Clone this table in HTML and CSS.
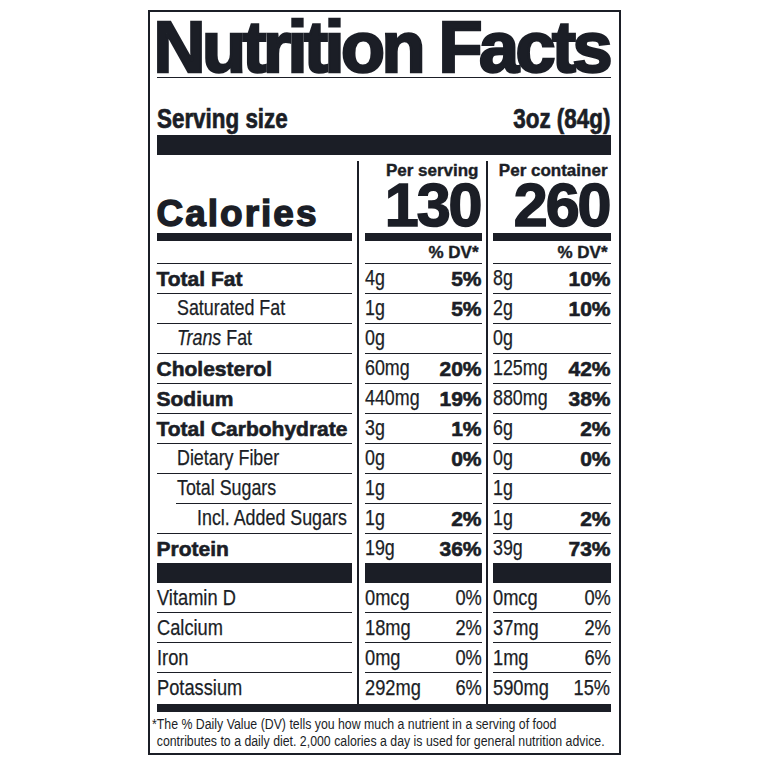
FILE: index.html
```html
<!DOCTYPE html>
<html lang="en">
<head>
<meta charset="utf-8">
<title>Nutrition Facts</title>
<link rel="stylesheet" href="styles.css">
</head>
<body>
<section class="label">
  <h1 class="title">Nutrition Facts</h1>
  <div class="serving"><span class="sq">Serving size</span><span class="sq end">3oz (84g)</span></div>
  <div class="facts">
    <div class="vline va"></div>
    <div class="vline vb"></div>

    <div class="c1 cal cal-label">Calories</div>
    <div class="c2 cal cal-col"><div class="per">Per serving</div><div class="big">130</div></div>
    <div class="c3 cal cal-col"><div class="per">Per container</div><div class="big">260</div></div>

    <div class="c1 dv"></div>
    <div class="c2 dv">% DV*</div>
    <div class="c3 dv">% DV*</div>

    <div class="c1 row b">Total Fat</div>
    <div class="c2 row val"><span class="r">4g</span><span class="b">5%</span></div>
    <div class="c3 row val"><span class="r">8g</span><span class="b">10%</span></div>

    <div class="c1 row in1"><span class="r">Saturated Fat</span></div>
    <div class="c2 row val"><span class="r">1g</span><span class="b">5%</span></div>
    <div class="c3 row val"><span class="r">2g</span><span class="b">10%</span></div>

    <div class="c1 row in1"><span class="r"><i>Trans</i> Fat</span></div>
    <div class="c2 row val"><span class="r">0g</span></div>
    <div class="c3 row val"><span class="r">0g</span></div>

    <div class="c1 row b">Cholesterol</div>
    <div class="c2 row val"><span class="r">60mg</span><span class="b">20%</span></div>
    <div class="c3 row val"><span class="r">125mg</span><span class="b">42%</span></div>

    <div class="c1 row b">Sodium</div>
    <div class="c2 row val"><span class="r">440mg</span><span class="b">19%</span></div>
    <div class="c3 row val"><span class="r">880mg</span><span class="b">38%</span></div>

    <div class="c1 row b">Total Carbohydrate</div>
    <div class="c2 row val"><span class="r">3g</span><span class="b">1%</span></div>
    <div class="c3 row val"><span class="r">6g</span><span class="b">2%</span></div>

    <div class="c1 row in1"><span class="r">Dietary Fiber</span></div>
    <div class="c2 row val"><span class="r">0g</span><span class="b">0%</span></div>
    <div class="c3 row val"><span class="r">0g</span><span class="b">0%</span></div>

    <div class="c1 row sugars"><span class="r">Total Sugars</span></div>
    <div class="c2 row val"><span class="r">1g</span></div>
    <div class="c3 row val"><span class="r">1g</span></div>

    <div class="c1 row in2"><span class="r">Incl. Added Sugars</span></div>
    <div class="c2 row val"><span class="r">1g</span><span class="b">2%</span></div>
    <div class="c3 row val"><span class="r">1g</span><span class="b">2%</span></div>

    <div class="c1 row heavy b">Protein</div>
    <div class="c2 row heavy val"><span class="r">19g</span><span class="b">36%</span></div>
    <div class="c3 row heavy val"><span class="r">39g</span><span class="b">73%</span></div>

    <div class="c1 row vit"><span class="r">Vitamin D</span></div>
    <div class="c2 row val vit"><span class="r">0mcg</span><span class="r end">0%</span></div>
    <div class="c3 row val vit"><span class="r">0mcg</span><span class="r end">0%</span></div>

    <div class="c1 row vit"><span class="r">Calcium</span></div>
    <div class="c2 row val vit"><span class="r">18mg</span><span class="r end">2%</span></div>
    <div class="c3 row val vit"><span class="r">37mg</span><span class="r end">2%</span></div>

    <div class="c1 row vit"><span class="r">Iron</span></div>
    <div class="c2 row val vit"><span class="r">0mg</span><span class="r end">0%</span></div>
    <div class="c3 row val vit"><span class="r">1mg</span><span class="r end">6%</span></div>

    <div class="c1 row vit last"><span class="r">Potassium</span></div>
    <div class="c2 row val vit last"><span class="r">292mg</span><span class="r end">6%</span></div>
    <div class="c3 row val vit last"><span class="r">590mg</span><span class="r end">15%</span></div>
  </div>
  <p class="foot"><span class="fn">*The % Daily Value (DV) tells you how much a nutrient in a serving of food<br>contributes to a daily diet. 2,000 calories a day is used for general nutrition advice.</span></p>
</section>
</body>
</html>
```

FILE: styles.css
```css
* {
  box-sizing: border-box;
  margin: 0;
  padding: 0;
}

body {
  margin: 0;
  background: #ffffff;
  color: #1b1e26;
  font-family: "Liberation Sans", Arial, sans-serif;
}

.label {
  width: 473px;
  margin: 10px auto 0;
  border: 2px solid #1b1e26;
  padding: 0 8px 0 7px;
}

.title {
  font-size: 72px;
  font-weight: 700;
  line-height: 60px;
  height: 66px;
  padding-top: 5px;
  letter-spacing: -3.5px;
  text-indent: -3px;
  white-space: nowrap;
  -webkit-text-stroke: 2.5px #1b1e26;
  border-bottom: 1px solid #1b1e26;
}

.serving {
  display: flex;
  justify-content: space-between;
  font-weight: 700;
  font-size: 28px;
  line-height: 30px;
  padding: 26px 0 1px;
  border-bottom: 20px solid #1b1e26;
  white-space: nowrap;
  -webkit-text-stroke: 0.7px #1b1e26;
}

/* condensed type: the label face is a narrow grotesque */
.sq {
  display: inline-block;
  transform: scaleX(0.8);
  transform-origin: 0 50%;
}

.sq.end {
  transform-origin: 100% 50%;
}

.facts {
  display: grid;
  grid-template-columns: 195px 13px 117px 11px 118px;
  grid-template-rows: 80px 23px repeat(9, 30px) 49px repeat(3, 30px) 31px;
  margin-top: 6px;
}

.vline {
  grid-row: 1 / -1;
  width: 2px;
  justify-self: center;
  background: #1b1e26;
}

.va { grid-column: 2; }
.vb { grid-column: 4; }

.c1 { grid-column: 1; }
.c2 { grid-column: 3; }
.c3 { grid-column: 5; }

.cal {
  border-bottom: 8px solid #1b1e26;
}

.cal-label {
  display: flex;
  align-items: flex-end;
  padding-bottom: 1px;
  font-size: 37px;
  font-weight: 700;
  line-height: 37px;
  letter-spacing: 2px;
  -webkit-text-stroke: 1.4px #1b1e26;
}

.cal-col {
  display: flex;
  flex-direction: column;
  align-items: flex-end;
  padding-right: 3px;
  font-weight: 700;
}

.per {
  font-size: 17px;
  line-height: 19px;
  -webkit-text-stroke: 0.4px #1b1e26;
}

.big {
  font-size: 61px;
  line-height: 50px;
  letter-spacing: -2px;
  margin-right: -2px;
  -webkit-text-stroke: 1.6px #1b1e26;
}

.dv {
  border-bottom: 1px solid #1b1e26;
  padding: 1px 3px 0 0;
  text-align: right;
  font-size: 17px;
  font-weight: 700;
  line-height: 21px;
  -webkit-text-stroke: 0.4px #1b1e26;
}

.row {
  border-bottom: 1px solid #1b1e26;
  line-height: 29px;
  white-space: nowrap;
}

.row.heavy {
  border-bottom: 20px solid #1b1e26;
}

.row.last {
  border-bottom: none;
}

.val {
  display: flex;
  justify-content: space-between;
}

.b {
  font-weight: 700;
  font-size: 21px;
  -webkit-text-stroke: 0.6px #1b1e26;
}

.r {
  display: inline-block;
  font-weight: 400;
  font-size: 21.5px;
  transform: scaleX(0.83);
  transform-origin: 0 50%;
  -webkit-text-stroke: 0.25px #1b1e26;
}

.r.end {
  transform-origin: 100% 50%;
}

.vit .r {
  font-size: 22px;
}

.in1 { padding-left: 20px; }
.in2 { padding-left: 40px; }

.sugars {
  margin-left: 19px;
  padding-left: 1px;
}

.foot {
  border-top: 8px solid #1b1e26;
  padding: 4px 0 3px;
  font-size: 14px;
  line-height: 17px;
  white-space: nowrap;
}

.fn {
  display: inline-block;
  margin-left: -4.5px;
  padding-left: 5.4px;
  text-indent: -5.4px;
  transform: scaleX(0.88);
  transform-origin: 0 0;
}
```
